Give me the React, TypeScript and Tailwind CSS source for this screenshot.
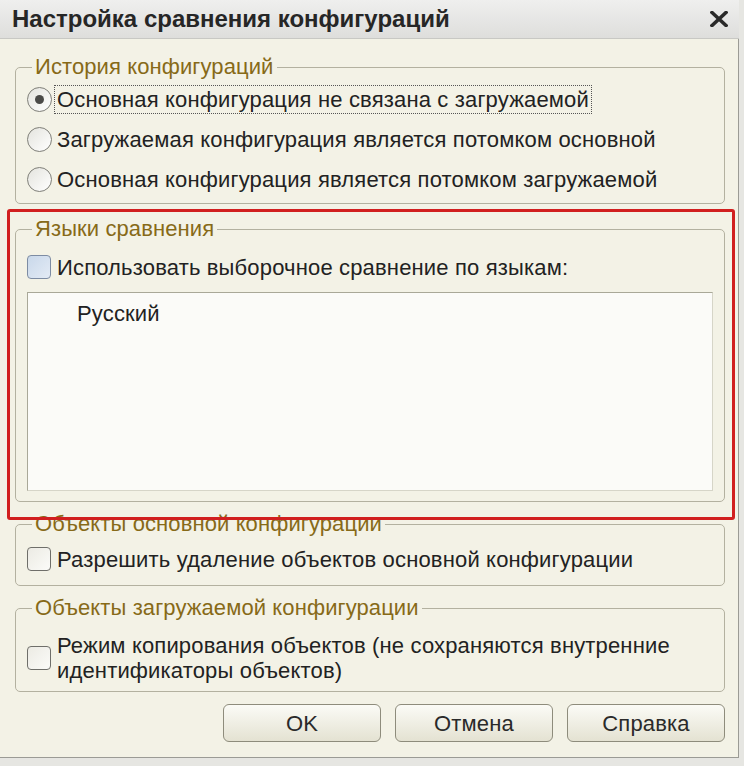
import React from 'react';

const font = { fontFamily: '"Liberation Sans", Arial, sans-serif' };

type GroupProps = {
  title: string;
  className?: string;
  children: React.ReactNode;
};

const Group: React.FC<GroupProps> = ({ title, className = '', children }) => (
  <fieldset className={`rounded-[5px] border border-[#b3b1a0] px-[11px] ${className}`}>
    <legend className="ml-[5px] px-[3px] text-[22px] leading-[24px] tracking-[0.1px] text-[#876a18]">{title}</legend>
    {children}
  </fieldset>
);

const Radio: React.FC<{ checked?: boolean }> = ({ checked }) => (
  <span className="flex h-[25px] w-[25px] shrink-0 items-center justify-center rounded-full border border-[#7f7f78] bg-gradient-to-br from-[#e4e4de] to-[#ffffff]">
    {checked && <span className="h-[9px] w-[9px] rounded-full bg-[#4a4a48]" />}
  </span>
);

const Checkbox: React.FC<{ tinted?: boolean }> = ({ tinted }) => (
  <span
    className={`h-[24px] w-[24px] shrink-0 rounded-[4px] border ${
      tinted
        ? 'border-[#7d8ca3] bg-gradient-to-br from-[#c9d8ea] to-[#e3ebf5]'
        : 'border-[#6f6f6a] bg-gradient-to-br from-[#ecebe4] to-[#fbfbf8]'
    }`}
  />
);

const radios = [
  'Основная конфигурация не связана с загружаемой',
  'Загружаемая конфигурация является потомком основной',
  'Основная конфигурация является потомком загружаемой',
];

const Button: React.FC<{ label: string }> = ({ label }) => (
  <button className="h-[38px] w-[158px] rounded-[6px] border border-[#8e8c7c] bg-gradient-to-b from-[#fbfbf6] to-[#e4e2d2] text-[22px] text-[#2a2a2a]">
    {label}
  </button>
);

export default function App() {
  return (
    <div className="relative flex h-[766px] w-[744px] flex-col bg-[#e6e6e2] text-[#222]" style={font}>
      {/* Title bar */}
      <div className="flex h-[39px] w-[739px] items-center justify-between border-b border-[#c8c8c4] bg-gradient-to-b from-[#efefee] to-[#dededc] pl-[12px] pr-[11px]">
        <span className="text-[24px] font-bold text-[#262626]">Настройка сравнения конфигураций</span>
        <svg width="18" height="16" viewBox="0 0 18 16">
          <path d="M2 1.5 L16 14.5 M16 1.5 L2 14.5" stroke="#2a2a2a" strokeWidth="3.6" strokeLinecap="square" />
        </svg>
      </div>

      {/* Body */}
      <div className="flex h-[719px] w-[739px] flex-col border-r border-b border-[#9b9b95] bg-[#f3f2e6] pl-[15px] pr-[13px] pt-[16px] text-[22px] tracking-[0.16px]">
        <Group title="История конфигураций" className="pb-[4px]">
          <div className="flex flex-col">
            {radios.map((r, i) => (
              <div key={r} className="flex h-[40px] items-center">
                <Radio checked={i === 0} />
                <span
                  className={`ml-[2px] border px-[2px] leading-[27px] ${
                    i === 0 ? 'border-dotted border-[#555]' : 'border-transparent'
                  }`}
                >
                  {r}
                </span>
              </div>
            ))}
          </div>
        </Group>

        <Group title="Языки сравнения" className="mt-[13px] pb-[10px]">
          <div className="mt-[12px] flex h-[28px] items-center gap-[6px]">
            <Checkbox tinted />
            <span>Использовать выборочное сравнение по языкам:</span>
          </div>
          <div className="mt-[11px] h-[199px] border border-[#a9a898] border-b-[#d6d5c8] border-r-[#d6d5c8] bg-[#fbfbf8] pl-[49px] pt-[4px]">
            <span>Русский</span>
          </div>
        </Group>

        <Group title="Объекты основной конфигурации" className="mt-[10px] pb-[7px]">
          <div className="mt-[4px] flex h-[38px] items-center gap-[6px]">
            <Checkbox />
            <span>Разрешить удаление объектов основной конфигурации</span>
          </div>
        </Group>

        <Group title="Объекты загружаемой конфигурации" className="mt-[10px] pb-[8px]">
          <div className="mt-[13px] flex items-center gap-[6px]">
            <Checkbox />
            <span className="leading-[25px]">
              Режим копирования объектов (не сохраняются внутренние
              <br />
              идентификаторы объектов)
            </span>
          </div>
        </Group>

        <div className="mt-[12px] flex justify-end gap-[14px]">
          <Button label="OK" />
          <Button label="Отмена" />
          <Button label="Справка" />
        </div>
      </div>

      {/* Red highlight annotation */}
      <div className="pointer-events-none absolute left-[7px] top-[209px] h-[311px] w-[728px] rounded-[3px] border-[3px] border-[#d11f1f]" />
    </div>
  );
}
